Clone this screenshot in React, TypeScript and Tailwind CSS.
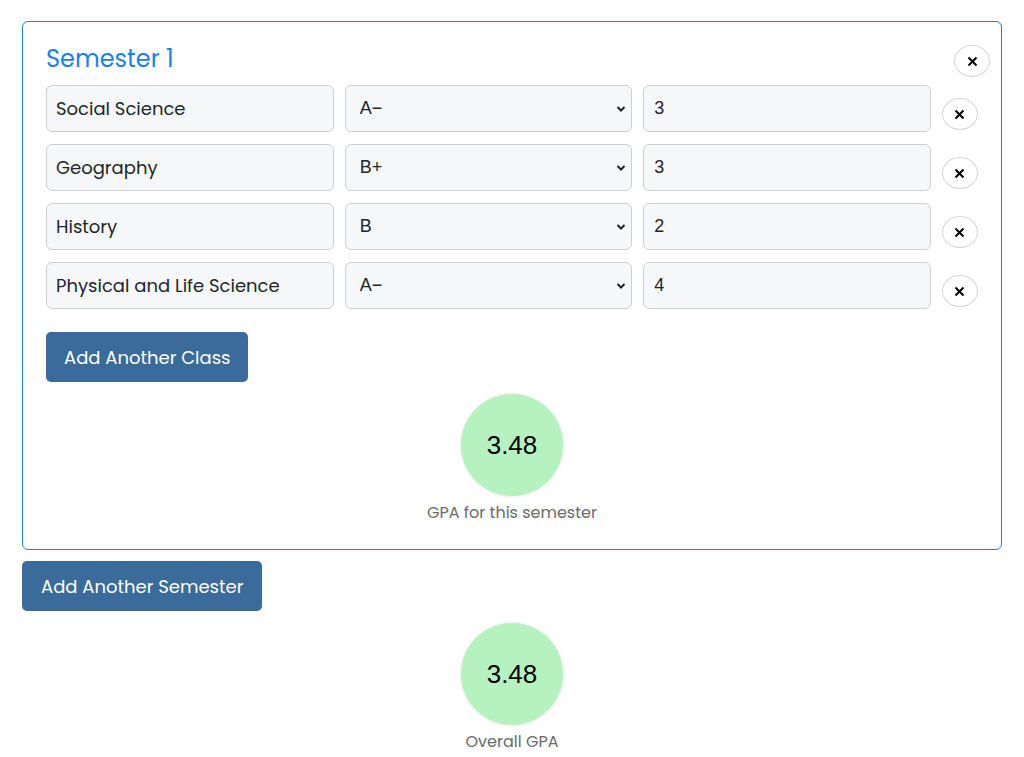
import { useState } from 'react';

interface ClassRow {
  id: number;
  name: string;
  grade: string;
  credits: string;
}

const GRADES = ['A+', 'A', 'A-', 'B+', 'B', 'B-', 'C+', 'C', 'C-', 'D+', 'D', 'F'];

const INITIAL: ClassRow[] = [
  { id: 1, name: 'Social Science', grade: 'A-', credits: '3' },
  { id: 2, name: 'Geography', grade: 'B+', credits: '3' },
  { id: 3, name: 'History', grade: 'B', credits: '2' },
  { id: 4, name: 'Physical and Life Science', grade: 'A-', credits: '4' },
];

const FONT = "font-['Poppins','Open_Sans','Noto_Sans',sans-serif]";

function CloseButton({ className = '' }: { className?: string }) {
  return (
    <button
      className={`w-9 h-8 shrink-0 rounded-[50%] border border-[#d4d4d4] bg-white flex items-center justify-center ${className}`}
    >
      <svg width="11" height="11" viewBox="0 0 11 11">
        <path d="M1.5 1.5 L9.5 9.5 M9.5 1.5 L1.5 9.5" stroke="#000" strokeWidth="2" />
      </svg>
    </button>
  );
}

function GpaCircle({ value, label }: { value: string; label: string }) {
  return (
    <div className="flex flex-col items-center">
      <div className="w-[102px] h-[102px] rounded-full bg-[#b5f2c0] shadow-[0_0_3px_rgba(0,0,0,0.15)] flex items-center justify-center">
        <span className="font-['Liberation_Sans',Arial,sans-serif] text-[26px] text-black">{value}</span>
      </div>
      <p className={`${FONT} mt-[5px] text-[16px] leading-6 text-[#6a6a6a]`}>{label}</p>
    </div>
  );
}

export default function App() {
  const [rows, setRows] = useState<ClassRow[]>(INITIAL);

  function update(id: number, field: keyof ClassRow, value: string) {
    setRows(rs => rs.map(r => (r.id === id ? { ...r, [field]: value } : r)));
  }

  return (
    <div className={`${FONT} bg-white min-h-[757px] px-[22px] pt-[21px]`}>
      {/* Semester card */}
      <div className="relative border border-[#1a7ef0] rounded-md px-[23px] pt-[23px] pb-[24px]">
        <CloseButton className="absolute top-[23px] right-[11px]" />
        <h2 className="text-[24px] leading-7 text-[#1a7ef0] mb-3">Semester 1</h2>

        <div className="flex flex-col gap-3">
          {rows.map(r => (
            <div
              key={r.id}
              className="grid grid-cols-[minmax(0,1fr)_minmax(0,1fr)_minmax(0,1fr)_36px] gap-[11px]"
            >
              <input
                value={r.name}
                onChange={e => update(r.id, 'name', e.target.value)}
                className="w-full h-[47px] px-[9px] rounded-md border border-[#cfcfcf] bg-[#f6f7f9] text-[18px] text-[#212529] outline-none"
              />
              <div className="relative">
                <select
                  value={r.grade}
                  onChange={e => update(r.id, 'grade', e.target.value)}
                  className="appearance-none w-full h-[47px] px-[14px] rounded-md border border-[#cfcfcf] bg-[#f6f7f9] font-['Liberation_Sans',Arial,sans-serif] text-[18px] text-[#212529] outline-none"
                >
                  {GRADES.map(g => (
                    <option key={g} value={g}>
                      {g === 'A-' ? 'A−' : g}
                    </option>
                  ))}
                </select>
                <svg
                  className="pointer-events-none absolute right-[6px] top-1/2 -translate-y-1/2"
                  width="10"
                  height="7"
                  viewBox="0 0 10 7"
                >
                  <path d="M1.5 1.5 L5 5 L8.5 1.5" stroke="#222" strokeWidth="2" fill="none" />
                </svg>
              </div>
              <input
                value={r.credits}
                onChange={e => update(r.id, 'credits', e.target.value)}
                className="w-full h-[47px] px-[10px] rounded-md border border-[#cfcfcf] bg-[#f6f7f9] font-['Liberation_Sans',Arial,sans-serif] text-[18px] text-[#212529] outline-none"
              />
              <CloseButton className="mt-[13px]" />
            </div>
          ))}
        </div>

        <button
          onClick={() =>
            setRows(rs => [...rs, { id: Date.now(), name: '', grade: 'A', credits: '' }])
          }
          className="mt-[23px] h-[50px] px-[18px] rounded-[5px] bg-[#3a6b9a] text-white text-[18px]"
        >
          Add Another Class
        </button>

        <div className="mt-[12px]">
          <GpaCircle value="3.48" label="GPA for this semester" />
        </div>
      </div>

      <button className="mt-[11px] h-[50px] px-[19px] rounded-[5px] bg-[#3a6b9a] text-white text-[18px]">
        Add Another Semester
      </button>

      <div className="mt-[12px]">
        <GpaCircle value="3.48" label="Overall GPA" />
      </div>
    </div>
  );
}
